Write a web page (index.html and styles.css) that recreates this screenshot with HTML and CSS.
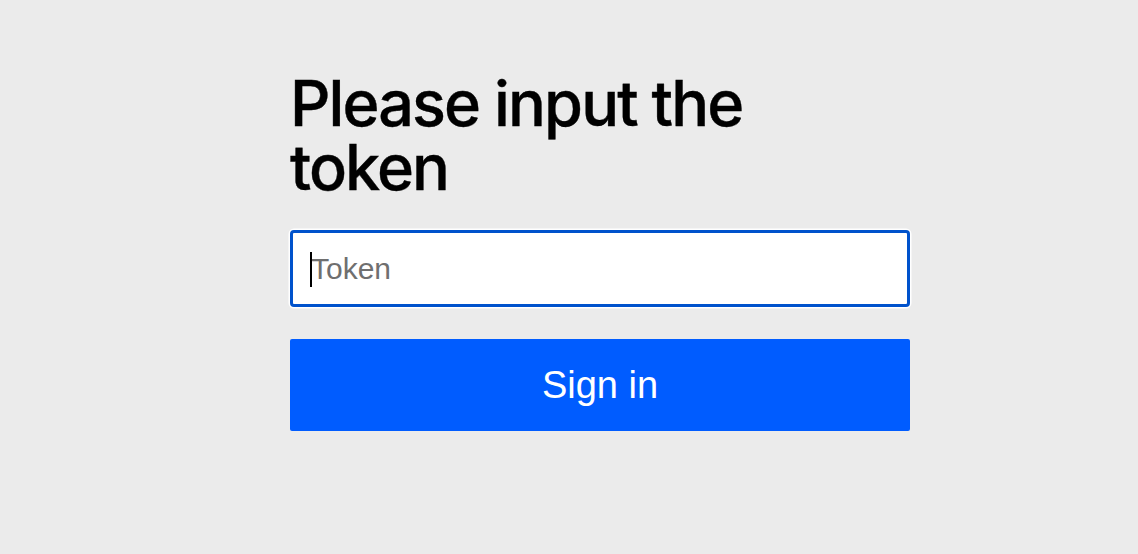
FILE: index.html
```html
<!DOCTYPE html>
<html lang="en">
<head>
<meta charset="utf-8">
<title>Sign in</title>
<link rel="stylesheet" href="styles.css">
</head>
<body>
<main class="login">
  <h1 class="login-title">Please input the token</h1>
  <form class="login-form">
    <div class="field">
      <input class="field-input" type="text" placeholder="Token">
      <span class="caret"></span>
    </div>
    <button class="btn-primary" type="button">Sign in</button>
  </form>
</main>
</body>
</html>
```

FILE: styles.css
```css
html, body {
  margin: 0;
  padding: 0;
  background: #ebebeb;
}

body {
  min-height: 554px;
}

.login {
  width: 620px;
  margin-left: 290px;
  padding-top: 71px;
}

.login-title {
  margin: 0;
  width: 480px;
  font-family: Inter, "Noto Sans", sans-serif;
  font-weight: 500;
  font-size: 63px;
  line-height: 64px;
  letter-spacing: -1.9px;
  color: #000;
  -webkit-text-stroke: 0.4px #000;
}

.login-form {
  margin-top: 31px;
  display: flex;
  flex-direction: column;
  gap: 32px;
}

.field {
  position: relative;
}

.field-input {
  display: block;
  box-sizing: border-box;
  width: 620px;
  height: 77px;
  margin: 0;
  padding: 0 18px;
  border: 3px solid #0052cc;
  border-radius: 4px;
  box-shadow: 0 0 0 1.5px #ffffff;
  background: #fff;
  outline: none;
  font-family: "Liberation Sans", Arial, sans-serif;
  font-size: 30px;
  color: #161616;
  letter-spacing: 0;
}

.field-input::placeholder {
  color: #6f6f6f;
}

.caret {
  position: absolute;
  left: 20px;
  top: 22px;
  width: 2px;
  height: 35px;
  background: #000;
}

.btn-primary {
  box-sizing: border-box;
  width: 620px;
  height: 92px;
  margin: 0;
  padding: 0;
  border: none;
  border-radius: 2px;
  background: #005cff;
  color: #fff;
  font-family: "Liberation Sans", Arial, sans-serif;
  font-size: 38px;
  cursor: pointer;
}
```
